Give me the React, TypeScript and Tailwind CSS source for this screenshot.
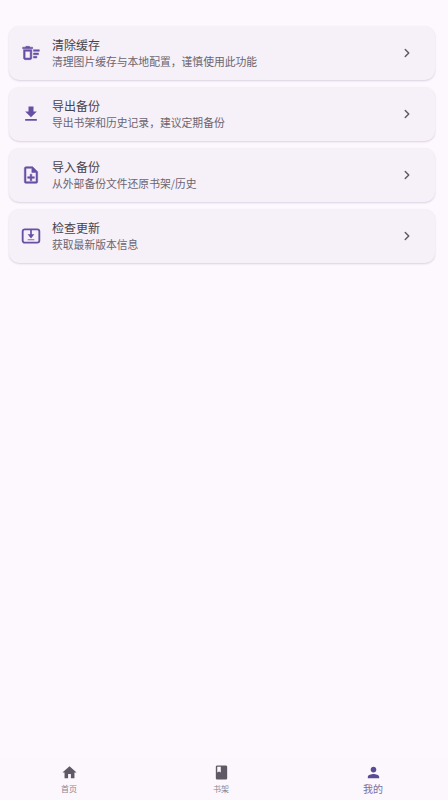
import type { ReactNode } from 'react';
import { ChevronRight } from 'lucide-react';
import { MdBook, MdFileDownload, MdHome, MdPerson } from 'react-icons/md';

interface SettingRow {
  title: string;
  desc: string;
  icon: ReactNode;
}

function SweepIcon() {
  return (
    <svg viewBox="0 0 24 24" className="w-[20px] h-[20px]" fill="currentColor" stroke="currentColor" strokeWidth="0.6">
      <path d="M15 16h4v2h-4zm0-8h7v2h-7zm0 4h6v2h-6zM3 18c0 1.1.9 2 2 2h6c1.1 0 2-.9 2-2V8H3v10zm2-8h6v8H5v-8zm5-6H6L5 5H2v2h12V5h-3z" />
    </svg>
  );
}

function ImportIcon() {
  return (
    <svg viewBox="0 0 24 24" className="w-[20px] h-[20px]" fill="currentColor" stroke="currentColor" strokeWidth="0.6">
      <path d="M13 11h-2v3H8v2h3v3h2v-3h3v-2h-3zm1-9H6c-1.1 0-2 .9-2 2v16c0 1.1.89 2 1.99 2H18c1.1 0 2-.9 2-2V8l-6-6zm4 18H6V4h7v5h5v11z" />
    </svg>
  );
}

function UpdateIcon() {
  return (
    <svg viewBox="0 0 24 24" className="w-[20px] h-[20px]" fill="none">
      <rect x="2" y="4" width="20" height="16" rx="2.5" stroke="currentColor" strokeWidth="2.2" />
      <path d="M11 4h2v6h3l-4 5-4-5h3z" fill="currentColor" />
      <path d="M8 16.5h8" stroke="currentColor" strokeWidth="1" />
    </svg>
  );
}

const ROWS: SettingRow[] = [
  {
    title: '清除缓存',
    desc: '清理图片缓存与本地配置，谨慎使用此功能',
    icon: <SweepIcon />,
  },
  {
    title: '导出备份',
    desc: '导出书架和历史记录，建议定期备份',
    icon: <MdFileDownload size={20} />,
  },
  {
    title: '导入备份',
    desc: '从外部备份文件还原书架/历史',
    icon: <ImportIcon />,
  },
  {
    title: '检查更新',
    desc: '获取最新版本信息',
    icon: <UpdateIcon />,
  },
];

const font = 'font-["Noto_Sans_CJK_SC","Noto_Sans",sans-serif]';

export default function App() {
  return (
    <div className={`w-[448px] h-[800px] flex flex-col bg-[#fdf7fe] ${font}`}>
      <div className="flex-1 pl-[9px] pt-[26px] pr-[13px] flex flex-col gap-[7px]">
        {ROWS.map((row) => (
          <div
            key={row.title}
            className="h-[54px] flex items-center rounded-[10px] bg-[#f6f0f8] shadow-[0_1px_2px_rgba(80,60,100,0.2)]"
          >
            <div className="w-[43px] flex justify-center text-[#6750a4]">{row.icon}</div>
            <div className="flex-1 min-w-0 -mt-[1px]">
              <div className="mb-[1px] text-[12px] leading-[16px] text-[#47434c]">{row.title}</div>
              <div className="text-[10.8px] leading-[14px] text-[#6a6570]">{row.desc}</div>
            </div>
            <ChevronRight size={14} strokeWidth={2.5} className="mr-[21px] text-[#5e5a64]" />
          </div>
        ))}
      </div>

      <div className="h-[42px] flex gap-[72px] pl-[29px] pt-[6px] bg-[#fcf6fd]">
        <div className="w-[80px] flex flex-col items-center text-[#5e5964]">
          <MdHome size={17} />
          <span className="mt-[2px] text-[8px] leading-[11px] text-[#8a8590]">首页</span>
        </div>
        <div className="w-[80px] flex flex-col items-center text-[#5e5964]">
          <MdBook size={17} />
          <span className="mt-[2px] text-[8px] leading-[11px] text-[#8a8590]">书架</span>
        </div>
        <div className="w-[80px] flex flex-col items-center text-[#5b4a94]">
          <MdPerson size={17} />
          <span className="mt-[1px] text-[10px] leading-[13px] text-[#7a6fa0]">我的</span>
        </div>
      </div>
    </div>
  );
}
